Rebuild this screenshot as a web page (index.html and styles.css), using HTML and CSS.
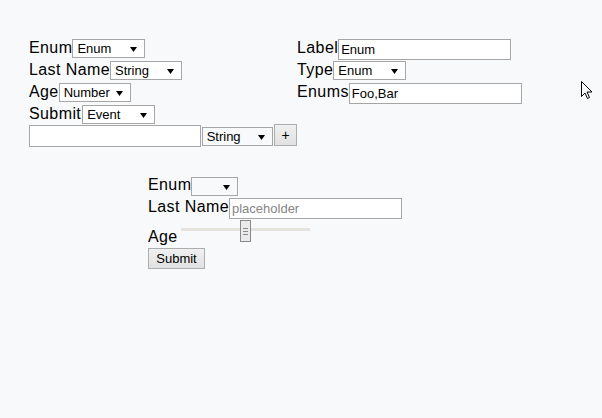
FILE: index.html
```html
<!DOCTYPE html>
<html>
<head>
<meta charset="utf-8">
<link rel="stylesheet" href="styles.css">
</head>
<body>
<div class="page">
  <div class="top">
    <div class="col-left">
      <div class="row"><span class="lbl">Enum</span><span class="sel w73">Enum<svg class="arr" width="7" height="5" viewBox="0 0 7 5"><path d="M0 0H7L3.5 5Z"/></svg></span></div>
      <div class="row"><span class="lbl">Last Name</span><span class="sel w72">String<svg class="arr" width="7" height="5" viewBox="0 0 7 5"><path d="M0 0H7L3.5 5Z"/></svg></span></div>
      <div class="row"><span class="lbl">Age</span><span class="sel w72">Number<svg class="arr" width="7" height="5" viewBox="0 0 7 5"><path d="M0 0H7L3.5 5Z"/></svg></span></div>
      <div class="row"><span class="lbl lbl-wide">Submit</span><span class="sel w73">Event<svg class="arr" width="7" height="5" viewBox="0 0 7 5"><path d="M0 0H7L3.5 5Z"/></svg></span></div>
      <div class="row row-add"><span class="txt w173"></span><span class="sel w72 sel-low">String<svg class="arr" width="7" height="5" viewBox="0 0 7 5"><path d="M0 0H7L3.5 5Z"/></svg></span><span class="btn btn-plus">+</span></div>
    </div>
    <div class="col-right">
      <div class="row"><span class="lbl">Label</span><span class="txt w173">Enum</span></div>
      <div class="row"><span class="lbl">Type</span><span class="sel w73">Enum<svg class="arr" width="7" height="5" viewBox="0 0 7 5"><path d="M0 0H7L3.5 5Z"/></svg></span></div>
      <div class="row"><span class="lbl">Enums</span><span class="txt w173">Foo,Bar</span></div>
    </div>
  </div>
  <div class="preview">
    <div class="row"><span class="lbl">Enum</span><span class="sel w47 sel-low"><svg class="arr" width="7" height="5" viewBox="0 0 7 5"><path d="M0 0H7L3.5 5Z"/></svg></span></div>
    <div class="row"><span class="lbl">Last Name</span><span class="txt w173 ph">placeholder</span></div>
    <div class="row row-age"><span class="lbl">Age</span><span class="slider"><span class="thumb"><i></i><i></i><i></i></span></span></div>
    <div class="row-btn"><span class="btn btn-submit">Submit</span></div>
  </div>
</div>
<svg class="cursor" width="14" height="21" viewBox="0 0 14 21"><path d="M1.5 1.5V16.5L5 13L7.5 18.5L9.5 17.5L7 12H12Z" fill="#fff" stroke="#000" stroke-width="1" stroke-linejoin="miter"/></svg>
</body>
</html>
```
FILE: styles.css
```css
html, body {
  margin: 0;
  background: #f8f9fa;
  font-family: "Liberation Sans", Arial, sans-serif;
  font-size: 16px;
  color: #000;
}
.page {
  padding: 37px 0 0 29px;
}
.top {
  display: flex;
}
.col-left {
  width: 268px;
}
.row {
  display: flex;
  align-items: flex-start;
  height: 22px;
  line-height: 22px;
}
.lbl {
  white-space: nowrap;
  letter-spacing: 0.4px;
}
.lbl-wide {
  margin-right: 1px;
}
.sel {
  box-sizing: border-box;
  display: inline-flex;
  align-items: center;
  height: 19px;
  margin-top: 2px;
  border: 1px solid #a6a6a6;
  background: #fff;
  font-size: 13px;
  line-height: 17px;
  padding-left: 4px;
  padding-right: 7px;
}
.sel .arr {
  margin-left: auto;
  margin-top: 1px;
}
.sel-low {
  margin-top: 3px;
  background: #f8f9fa;
}
.w73 { width: 73px; }
.w72 { width: 72px; }
.w47 { width: 47px; }
.w173 { width: 173px; }
.txt {
  box-sizing: border-box;
  display: inline-block;
  height: 21px;
  margin-top: 2px;
  border: 1px solid #a6a6a6;
  background: #fff;
  font-size: 13px;
  line-height: 19px;
  padding-left: 2px;
}
.ph {
  color: #858585;
}
.row-add .txt {
  height: 22px;
  margin-top: 0;
}
.row-add .sel {
  margin-top: 2px;
  margin-left: 1px;
}
.btn {
  box-sizing: border-box;
  display: inline-flex;
  align-items: center;
  justify-content: center;
  border: 1px solid #adadad;
  background: linear-gradient(#f0f0f0, #e1e1e1);
  font-size: 13px;
  color: #000;
}
.btn-plus {
  width: 23px;
  height: 22px;
  margin-top: -1px;
  margin-left: 1px;
  font-size: 14px;
}
.preview {
  padding: 27px 0 0 119px;
}
.row-age {
  height: 30px;
  align-items: flex-end;
}
.row-age .lbl {
  margin-right: 3px;
}
.slider {
  display: flex;
  align-items: center;
  width: 129px;
  height: 22px;
  margin-bottom: 6px;
  background: linear-gradient(to bottom, transparent 8px, #e6e2dd 8px, #e6e2dd 11px, transparent 11px);
}
.thumb {
  box-sizing: border-box;
  width: 11px;
  height: 22px;
  margin-left: 59px;
  border: 1px solid #8a8a8a;
  background: #ebebeb;
  display: flex;
  flex-direction: column;
  align-items: center;
  justify-content: center;
  gap: 2px;
}
.thumb i {
  display: block;
  width: 5px;
  height: 1px;
  background: #8a8a8a;
}
.row-btn {
  display: flex;
}
.btn-submit {
  width: 57px;
  height: 21px;
}
.cursor {
  position: absolute;
  left: 580px;
  top: 80px;
}
```
